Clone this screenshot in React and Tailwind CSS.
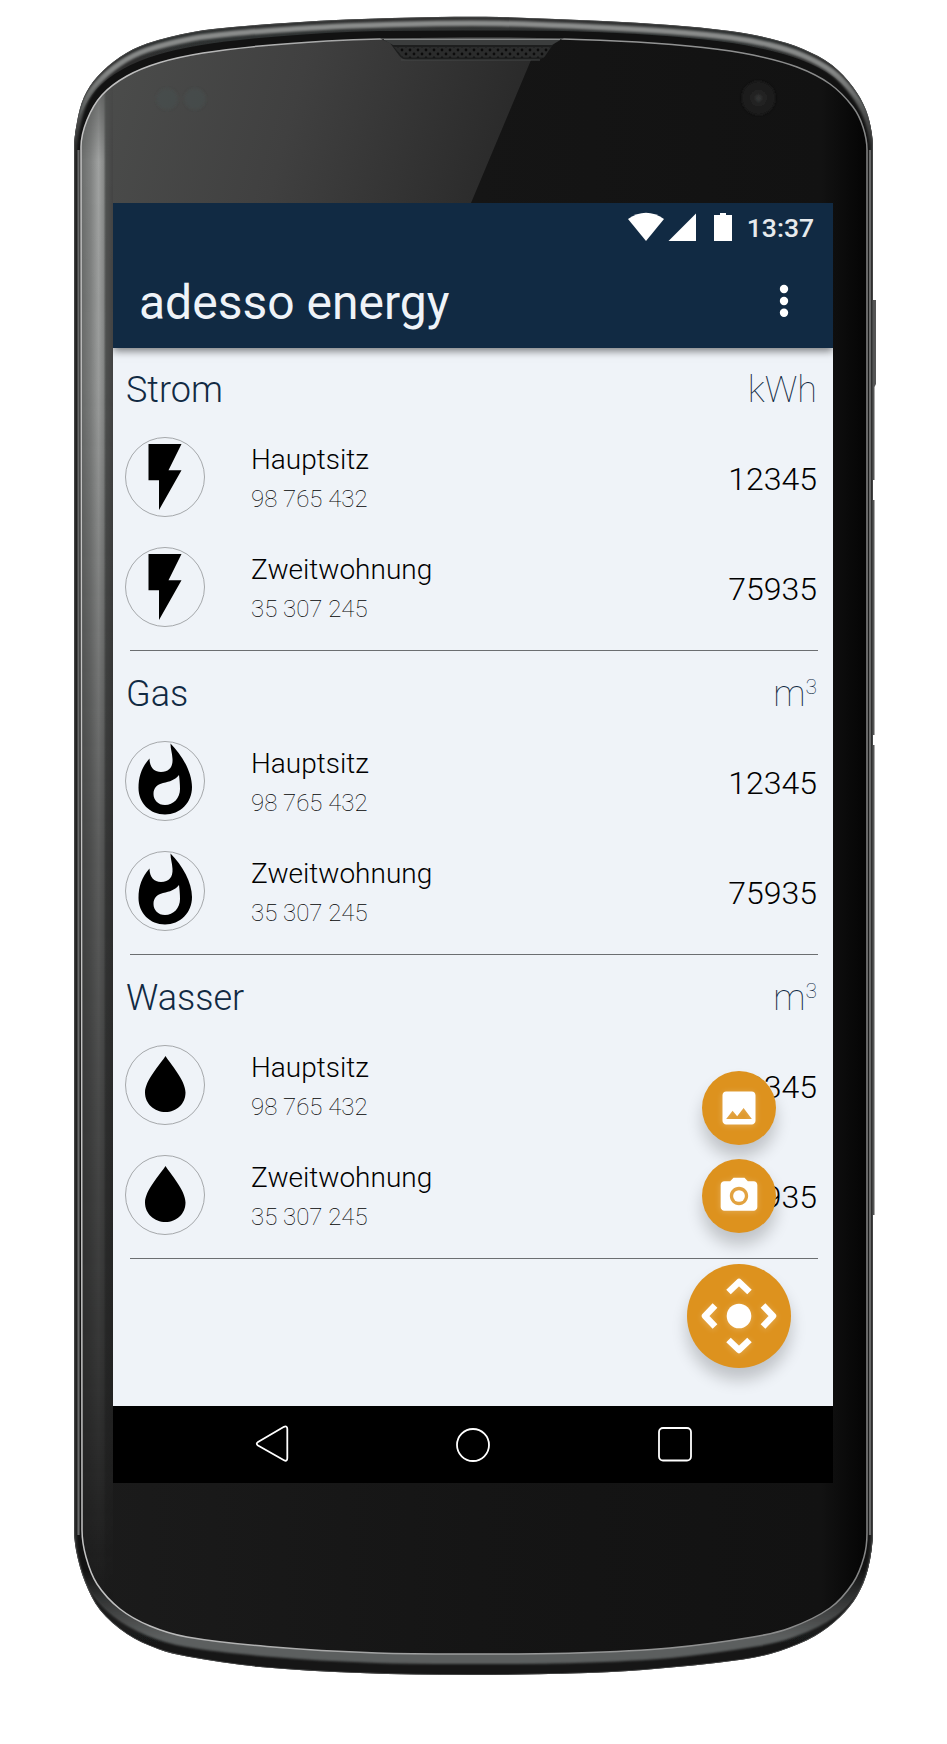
const smooth = (pts) => {
  let d = `M${pts[0][0]} ${pts[0][1]}`
  const n = pts.length
  for (let i = 0; i < n; i++) {
    const a = pts[(i + n - 1) % n]
    const b = pts[i]
    const c = pts[(i + 1) % n]
    const e = pts[(i + 2) % n]
    const len = Math.hypot(c[0] - b[0], c[1] - b[1])
    if (len > 500) {
      d += `L${c[0]} ${c[1]}`
      continue
    }
    const la = Math.hypot(c[0] - a[0], c[1] - a[1])
    const lb = Math.hypot(e[0] - b[0], e[1] - b[1])
    const k = len / 3
    d += `C${b[0] + ((c[0] - a[0]) / la) * k} ${b[1] + ((c[1] - a[1]) / la) * k} ${c[0] - ((e[0] - b[0]) / lb) * k} ${c[1] - ((e[1] - b[1]) / lb) * k} ${c[0]} ${c[1]}`
  }
  return d + 'Z'
}

const OUTER = smooth([
  [74, 150], [77, 122], [84, 97], [97, 77], [120, 57], [147, 43.5], [193, 32], [233, 27], [293, 22.5], [347, 19.5], [437, 17],
  [500, 17], [603, 21], [670, 25], [730, 31], [770, 38.5], [803, 49], [832, 65], [853, 87], [866, 110], [872, 135], [873, 160],
  [873, 1530], [868, 1569], [857, 1596], [840, 1617], [815, 1636], [780, 1651], [743, 1659.5], [643, 1670], [570, 1673.5], [470, 1675],
  [360, 1673], [260, 1667], [187, 1656.5], [158, 1649], [127, 1634], [100, 1610], [85, 1582], [76, 1550], [74, 1525],
])

const FACE = smooth([
  [81, 147], [87, 120], [102, 95], [127, 76], [160, 62.5], [203, 53], [260, 46], [327, 41], [380, 39], [470, 38.5],
  [563, 39], [637, 42], [703, 47.5], [753, 55], [797, 67], [830, 84], [853, 107], [863, 127], [867, 150],
  [867, 1533], [864, 1557], [853, 1583], [830, 1608], [790, 1628], [753, 1637], [670, 1648], [575, 1653], [480, 1654],
  [377, 1653], [267, 1646.5], [187, 1637], [150, 1626], [120, 1609], [97, 1584], [86, 1557], [82, 1530],
])

function PhoneBody() {
  return (
    <svg className="absolute inset-0" width="947" height="1744" viewBox="0 0 947 1744" aria-hidden="true">
      <defs>
        <linearGradient id="rim" x1="0" y1="17" x2="0" y2="1675" gradientUnits="userSpaceOnUse">
          <stop offset="0" stopColor="#303131" />
          <stop offset="0.08" stopColor="#2a2b2b" />
          <stop offset="0.5" stopColor="#303131" />
          <stop offset="0.92" stopColor="#222323" />
          <stop offset="1" stopColor="#161616" />
        </linearGradient>
        <linearGradient id="topBand" x1="0" y1="17" x2="0" y2="140" gradientUnits="userSpaceOnUse">
          <stop offset="0" stopColor="#8b8d8c" />
          <stop offset="0.4" stopColor="#858786" />
          <stop offset="1" stopColor="#6d6f6e" stopOpacity="0.3" />
        </linearGradient>
        <linearGradient id="lowBand" x1="0" y1="1570" x2="0" y2="1665" gradientUnits="userSpaceOnUse">
          <stop offset="0" stopColor="#5c5f5f" stopOpacity="0" />
          <stop offset="0.7" stopColor="#5c5f5f" />
        </linearGradient>
        <linearGradient id="glass" x1="83" y1="0" x2="868" y2="0" gradientUnits="userSpaceOnUse">
          <stop offset="0" stopColor="#1b1b1b" />
          <stop offset="0.5" stopColor="#151515" />
          <stop offset="0.94" stopColor="#121212" />
          <stop offset="1" stopColor="#040404" />
        </linearGradient>
        <linearGradient id="glare" x1="110" y1="70" x2="510" y2="180" gradientUnits="userSpaceOnUse">
          <stop offset="0" stopColor="#4b4c4b" />
          <stop offset="0.45" stopColor="#404040" />
          <stop offset="1" stopColor="#292929" />
        </linearGradient>
        <linearGradient id="side" x1="81" y1="0" x2="113" y2="0" gradientUnits="userSpaceOnUse">
          <stop offset="0" stopColor="#6a6c6b" />
          <stop offset="0.3" stopColor="#808281" />
          <stop offset="0.55" stopColor="#a0a2a1" />
          <stop offset="0.7" stopColor="#8a8c8b" />
          <stop offset="0.78" stopColor="#505251" />
          <stop offset="1" stopColor="#444444" />
        </linearGradient>
        <linearGradient id="sideFade" x1="0" y1="85" x2="0" y2="1600" gradientUnits="userSpaceOnUse">
          <stop offset="0" stopColor="#fff" stopOpacity="0.3" />
          <stop offset="0.05" stopColor="#fff" />
          <stop offset="0.2" stopColor="#fff" stopOpacity="0.95" />
          <stop offset="0.5" stopColor="#fff" stopOpacity="0.5" />
          <stop offset="0.85" stopColor="#fff" stopOpacity="0.2" />
          <stop offset="1" stopColor="#fff" stopOpacity="0" />
        </linearGradient>
        <linearGradient id="edge" x1="81" y1="38" x2="867" y2="38" gradientUnits="userSpaceOnUse">
          <stop offset="0" stopColor="#c4c4c4" />
          <stop offset="0.4" stopColor="#a0a1a1" />
          <stop offset="1" stopColor="#868787" />
        </linearGradient>
        <mask id="sideMask"><rect x="70" y="60" width="60" height="1600" fill="url(#sideFade)" /></mask>
        <filter id="soft" x="0" y="0" width="947" height="1744" filterUnits="userSpaceOnUse"><feGaussianBlur stdDeviation="1.1" /></filter>
        <filter id="softer" x="0" y="0" width="947" height="1744" filterUnits="userSpaceOnUse"><feGaussianBlur stdDeviation="0.6" /></filter>
        <clipPath id="faceClip"><path d={FACE} /></clipPath>
        <clipPath id="bodyClip"><path d={OUTER} /></clipPath>
        <pattern id="mesh" width="8" height="8" patternUnits="userSpaceOnUse">
          <rect width="8" height="8" fill="#2b2c2c" />
          <circle cx="2" cy="2" r="1.4" fill="#0c0c0c" />
          <circle cx="6" cy="6" r="1.4" fill="#0c0c0c" />
        </pattern>
      </defs>
      <path filter="url(#softer)" d="M871 300h5v84l-1.500 3v93h-3.500zM871 500h3.500v235h-3.500zM871 745h3.500v470h-3.500z" fill="#555" />
      <path d={OUTER} fill="url(#rim)" filter="url(#softer)" />
      <g clipPath="url(#bodyClip)">
        <path d={FACE} fill="none" stroke="#121212" strokeWidth="16" />
        <path d={OUTER} fill="none" stroke="url(#topBand)" strokeWidth="5.500" transform="translate(0 6.500)" filter="url(#soft)" />
        <path d={FACE} fill="none" stroke="url(#lowBand)" strokeWidth="20" filter="url(#soft)" />
        <path d={OUTER} fill="none" stroke="#4a4b4b" strokeWidth="1.500" />
        <path d="M78.500 150V1535M870 150V1535" stroke="#686969" strokeWidth="2.200" fill="none" />
      </g>
      <path d={FACE} fill="url(#glass)" />
      <g clipPath="url(#faceClip)">
        <path d="M70 20H548L531 60L471 203H70Z" fill="url(#glare)" />
        <rect x="81" y="60" width="32" height="1600" fill="url(#side)" mask="url(#sideMask)" />
      </g>
      <path d={FACE} fill="none" stroke="url(#edge)" strokeWidth="1.500" />
      <path d="M380 38.500H564L556 41L548 52Q544 59 538 60H408Q402 60 398 54L390 43Z" fill="#1d1e1e" />
      <path d="M382 39H562L552 45H393Z" fill="#3b3d3d" />
      <path d="M384 39.500H560" stroke="#8a8c8c" strokeWidth="1.200" />
      <path d="M394 47H551L544 57.500H403Z" fill="url(#mesh)" />
      <path d="M401 60H540" stroke="#454646" strokeWidth="1" />
      <g filter="url(#soft)">
        <circle cx="167" cy="99" r="11" fill="#48504e" opacity="0.5" />
        <circle cx="195" cy="99" r="11" fill="#48504e" opacity="0.5" />
        <circle cx="758.500" cy="98" r="17" fill="#1c1c1c" />
        <circle cx="758.500" cy="98" r="9" fill="#202020" />
        <circle cx="758.500" cy="98" r="3.500" fill="#303131" />
      </g>
    </svg>
  )
}

const GLYPHS = {
  bolt: <path d="M23.500 7H56.500L43.500 33.300H56.500L34 73V43.300H23.500Z" />,
  flame: (
    <path
      fillRule="evenodd"
      d="M45.500 2.500C57.500 14.500 67 31.500 67 46C67 62 55 73.500 40 73.500C25 73.500 13.500 62 13.500 47C13.500 35 17 26 24.500 17.500C24.500 26 29 31 36 31C44 31 48 26 47.500 18C47.200 12 45.500 8 45.500 2.500ZM54 34C50 39 45 40.500 38 42C32 43.500 28.500 47 28.500 53C28.500 59 33 64 40 64C48.500 64 55 57 55 48C55 43 54.500 38 54 34Z"
    />
  ),
  drop: <path d="M40.500 11C45 18.500 60.500 35 60.500 47.500C60.500 59 51.500 67 40.500 67C29.500 67 20 59 20 47.500C20 35 36 18.500 40.500 11Z" />,
}

const METERS = [
  { name: 'Hauptsitz', id: '98 765 432', value: '12345' },
  { name: 'Zweitwohnung', id: '35 307 245', value: '75935' },
]

const SECTIONS = [
  { title: 'Strom', unit: 'kWh', glyph: 'bolt' },
  { title: 'Gas', unit: 'm', exponent: '3', glyph: 'flame' },
  { title: 'Wasser', unit: 'm', exponent: '3', glyph: 'drop' },
]

function MeterRow({ name, id, value, glyph }) {
  return (
    <li className="flex h-[110px] items-start">
      <svg className="ml-3 size-20 shrink-0" viewBox="0 0 80 80" aria-hidden="true">
        <circle cx="40" cy="40" r="39.500" fill="none" stroke="#a5a8ab" strokeWidth="1" />
        {GLYPHS[glyph]}
      </svg>
      <div className="ml-[46px] flex-1 pt-[5px]">
        <p className="text-[28px] leading-9 font-light">{name}</p>
        <p className="mt-[3px] text-2xl leading-9 font-thin">{id}</p>
      </div>
      <p className="mr-4 pt-5 text-[32px] leading-[44px] font-light">{value}</p>
    </li>
  )
}

function Section({ title, unit, exponent, glyph }) {
  return (
    <section className="h-[304px] pt-[18px]">
      <header className="flex justify-between pr-4 pl-[13px] text-[#112a43]">
        <h2 className="text-4xl leading-[48px] font-light">{title}</h2>
        <p className="text-4xl leading-[48px] font-thin">
          {unit}
          {exponent && <sup className="relative -top-3 align-baseline text-[21px] leading-none">{exponent}</sup>}
        </p>
      </header>
      <ul className="mt-[23px]">
        {METERS.map((m) => (
          <MeterRow key={m.name} {...m} glyph={glyph} />
        ))}
      </ul>
      <hr className="mt-[-7px] mr-[15px] ml-[17px] border-[#6b6e71]" />
    </section>
  )
}

function StatusBar() {
  return (
    <div className="flex h-12 items-center pr-[19px]">
      <svg className="ml-auto" width="106" height="30" viewBox="626 212 106 30" fill="#fff" aria-hidden="true">
        <path d="M627 219Q645 206.500 663 219L645 241Z" />
        <path d="M667.500 241L695 213.500V241Z" />
        <path d="M713 215H719V213H725V215H731V241H713Z" />
      </svg>
      <span className="ml-3.5 pt-0.5 text-[26.500px] leading-none font-medium text-[#e7eaed]">13:37</span>
    </div>
  )
}

function ActionButtons() {
  const shadow = 'shadow-[0_12px_16px_rgba(0,0,0,0.2)]'
  return (
    <div className="absolute right-[42px] bottom-[115px] flex flex-col items-center">
      <button aria-label="Bild" className={`flex size-[74px] items-center justify-center rounded-full bg-[#dd921e] ${shadow}`}>
        <svg className="size-11 drop-shadow-[0_1px_3px_rgba(255,255,255,0.25)]" viewBox="0 0 24 24" fill="#fff">
          <path d="M21 19V5c0-1.100-.9-2-2-2H5c-1.100 0-2 .9-2 2v14c0 1.100.9 2 2 2h14c1.100 0 2-.9 2-2zM8.500 13.500l2.500 3.010L14.500 12l4.500 6H5l3.500-4.500z" />
        </svg>
      </button>
      <button aria-label="Kamera" className={`mt-3.5 flex size-[74px] items-center justify-center rounded-full bg-[#dd921e] ${shadow}`}>
        <svg className="size-11 drop-shadow-[0_1px_3px_rgba(255,255,255,0.25)]" viewBox="0 0 24 24" fill="#fff">
          <circle cx="12" cy="12" r="3.200" />
          <path d="M9 2L7.170 4H4c-1.100 0-2 .9-2 2v12c0 1.100.9 2 2 2h16c1.100 0 2-.9 2-2V6c0-1.100-.9-2-2-2h-3.170L15 2H9zm3 15c-2.760 0-5-2.240-5-5s2.240-5 5-5 5 2.240 5 5-2.240 5-5 5z" />
        </svg>
      </button>
      <button aria-label="Steuerung" className={`mt-[31px] size-[104px] rounded-full bg-[#dd921e] ${shadow}`}>
        <svg className="size-[104px] drop-shadow-[0_1px_3px_rgba(255,255,255,0.25)]" viewBox="0 0 104 104" fill="none">
          <circle cx="52" cy="52" r="12.300" fill="#fff" />
          <g stroke="#fff" strokeWidth="6.500" strokeLinejoin="round">
            <path d="M41.500 28L52 18L62.500 28" />
            <path d="M41.500 76L52 86L62.500 76" />
            <path d="M28 41.500L18 52L28 62.500" />
            <path d="M76 41.500L86 52L76 62.500" />
          </g>
        </svg>
      </button>
    </div>
  )
}

function NavBar() {
  return (
    <nav className="flex h-[77px] bg-black">
      <svg width="720" height="77" viewBox="113 1406 720 77" fill="none" stroke="#fff" strokeWidth="1.800" strokeLinejoin="round">
        <path d="M258 1442L284 1426.800Q287.300 1425.500 287.300 1429V1458Q287.300 1462 284 1460.200L258 1445.500Q255.500 1443.700 258 1442Z" />
        <circle cx="473" cy="1445" r="16" />
        <rect x="659" y="1428" width="32" height="32.500" rx="4" />
      </svg>
    </nav>
  )
}

export default function App() {
  return (
    <div className="relative h-[1744px] w-[947px] overflow-hidden bg-white pt-[203px] pl-[113px] font-['Roboto',sans-serif] text-black">
      <PhoneBody />
      <main className="relative flex h-[1280px] w-[720px] flex-col bg-[#eff3f8]">
        <header className="relative h-[145px] bg-[#112a43] shadow-[0_3px_8px_rgba(0,0,0,0.5)] [clip-path:inset(0_0_-20px_0)]">
          <StatusBar />
          <div className="flex items-center justify-between pt-5 pr-[43px] pl-[26px]">
            <h1 className="pt-1 text-[48px] leading-[56px] text-[#eff3f8]">adesso energy</h1>
            <svg width="12" height="34" viewBox="0 0 12 34" fill="#fff" aria-hidden="true">
              <circle cx="6" cy="5" r="4.200" />
              <circle cx="6" cy="17" r="4.200" />
              <circle cx="6" cy="28.700" r="4.200" />
            </svg>
          </div>
        </header>
        <div className="flex-1">
          {SECTIONS.map((s) => (
            <Section key={s.title} {...s} />
          ))}
        </div>
        <NavBar />
        <ActionButtons />
      </main>
    </div>
  )
}
